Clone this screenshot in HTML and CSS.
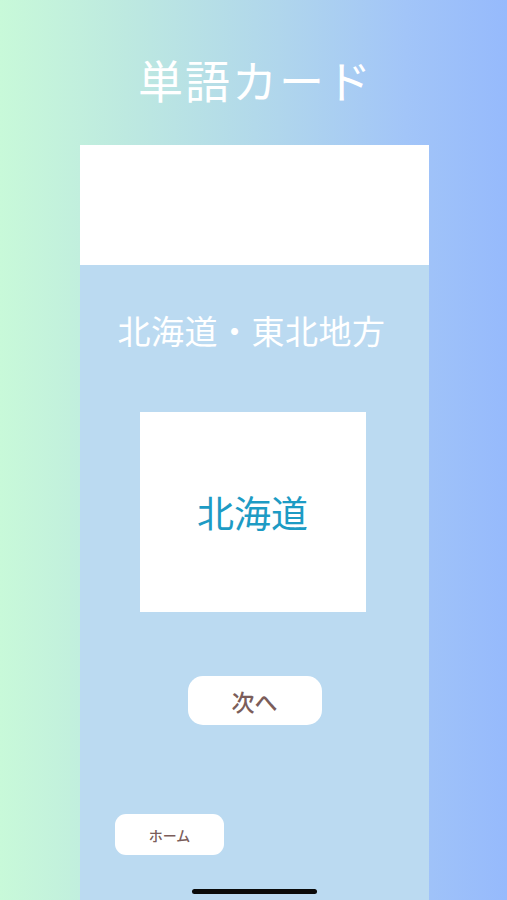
FILE: index.html
```html
<!DOCTYPE html>
<html lang="ja">
<head>
<meta charset="utf-8">
<title>単語カード</title>
<link rel="stylesheet" href="styles.css">
</head>
<body>
<div class="screen">
  <h1 class="title">単語カード</h1>
  <main class="panel">
    <div class="panel-top"></div>
    <section class="panel-body">
      <h2 class="category">北海道・東北地方</h2>
      <div class="card"><span class="word">北海道</span></div>
      <button class="btn btn-next">次へ</button>
      <button class="btn btn-home">ホーム</button>
    </section>
  </main>
  <div class="home-indicator"></div>
</div>
</body>
</html>
```
FILE: styles.css
```css
* { box-sizing: border-box; }
html, body { margin: 0; padding: 0; }
body {
  font-family: "Noto Sans CJK JP", "Noto Sans", sans-serif;
}
.screen {
  position: relative;
  width: 507px;
  height: 900px;
  overflow: hidden;
  background: linear-gradient(to right, #c8f9d9 0%, #bde9e0 25%, #b0d6ec 55%, #a2c5f8 80%, #96bafc 100%);
  display: flex;
  flex-direction: column;
  align-items: center;
}
.title {
  margin: 57px 0 0 0;
  height: 46px;
  font-size: 45px;
  line-height: 46px;
  font-weight: 400;
  color: #ffffff;
  letter-spacing: 2px;
  padding-left: 4px;
}
.panel {
  margin-top: 42px;
  margin-left: 2px;
  width: 349px;
  flex: 1;
  display: flex;
  flex-direction: column;
  background: #bbdaf1;
}
.panel-top {
  height: 120px;
  background: #ffffff;
}
.panel-body {
  display: flex;
  flex-direction: column;
  align-items: center;
  padding-top: 49px;
}
.category {
  margin: 0;
  font-size: 33px;
  line-height: 33px;
  font-weight: 400;
  color: #ffffff;
  margin-right: 6px;
  letter-spacing: 0.5px;
}
.card {
  margin-top: 65px;
  margin-right: 4px;
  width: 226px;
  height: 200px;
  background: #ffffff;
  display: flex;
  align-items: center;
  justify-content: center;
}
.word {
  font-size: 37px;
  line-height: 1;
  color: #1d9bc4;
  font-weight: 400;
}
.btn {
  border: none;
  background: #ffffff;
  font-family: "Noto Sans CJK JP", "Noto Sans", sans-serif;
  color: #7b5d5a;
  padding: 0;
  cursor: pointer;
}
.btn-next {
  margin-top: 64px;
  width: 134px;
  height: 49px;
  border-radius: 15px;
  font-size: 23px;
  font-weight: 500;
}
.btn-home {
  margin-top: 89px;
  align-self: flex-start;
  margin-left: 35px;
  width: 109px;
  height: 41px;
  border-radius: 11px;
  font-size: 14px;
  font-weight: 500;
}
.home-indicator {
  position: absolute;
  left: 192px;
  bottom: 6px;
  width: 125px;
  height: 5px;
  border-radius: 3px;
  background: #0a0a0a;
}
```
